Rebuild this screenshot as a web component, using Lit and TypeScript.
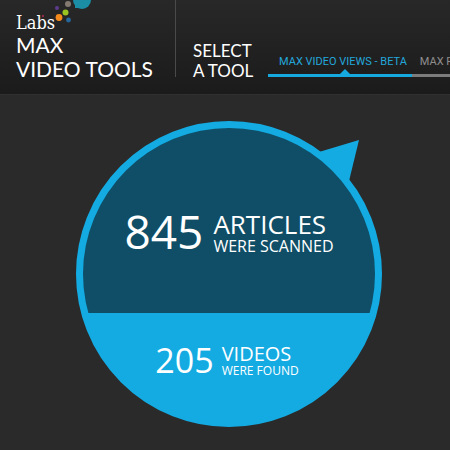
import { LitElement, html, css, svg } from "lit";
import { customElement } from "lit/decorators.js";

const DOTS = [
  { x: 82, y: 0, r: 9, fill: "#1b8ea6" },
  { x: 68, y: 4, r: 3, fill: "#857a72" },
  { x: 57, y: 8, r: 2, fill: "#5d3a8c" },
  { x: 65.5, y: 12.5, r: 3, fill: "#9ac420" },
  { x: 59, y: 17.5, r: 3.4, fill: "#f58a1c" },
  { x: 68.5, y: 20, r: 2.4, fill: "#24689e" },
  { x: 43, y: 16, r: 1.2, fill: "#8c2a4a" },
];

@customElement("tool-header")
export class ToolHeader extends LitElement {
  static styles = css`
    :host {
      display: flex;
      overflow: hidden;
      background: linear-gradient(#292828, #1c1b1b);
      border-bottom: 1px solid #303030;
      padding-bottom: 13px;
      color: #fff;
      font-family: Lato, sans-serif;
      white-space: nowrap;
    }
    .brand {
      position: relative;
      flex: none;
      box-sizing: border-box;
      width: 175px;
      padding: 13px 0 0 16px;
    }
    .dots {
      position: absolute;
      top: 0;
      left: 0;
    }
    .labs {
      font: 18px/20px "DejaVu Serif Condensed", "DejaVu Serif", serif;
    }
    h1 {
      margin: 0;
      font-size: 21px;
      line-height: 24px;
      font-weight: 400;
    }
    .rule {
      flex: none;
      width: 1px;
      height: 77px;
      background: #4a4a4a;
    }
    h2 {
      flex: none;
      box-sizing: border-box;
      width: 92px;
      margin: 0;
      padding: 41px 0 0 17px;
      font-size: 17px;
      line-height: 20px;
      font-weight: 400;
    }
    nav {
      display: flex;
      flex: 1;
      min-width: 0;
      height: 77px;
      align-items: flex-end;
      font-family: Roboto, sans-serif;
    }
    a {
      position: relative;
      flex: none;
      padding: 0 5px 4px 8px;
      border-bottom: 3px solid #7c7c7c;
      color: #8e8e8e;
      font-size: 11px;
      line-height: 16px;
      text-decoration: none;
    }
    a:last-child {
      flex: 1;
    }
    a.current {
      padding-left: 11px;
      border-color: #16a9e0;
      color: #22a7dc;
    }
    a.current::after {
      content: "";
      position: absolute;
      bottom: 0;
      left: 50%;
      border: 5px solid transparent;
      border-top: 0;
      border-bottom-color: #16a9e0;
    }
  `;

  render() {
    return html`
      <div class="brand">
        <svg class="dots" width="100" height="34" aria-hidden="true">
          <path d="M75 0 V8 H82 Z" fill="#1b8ea6" />
          ${DOTS.map((d) => svg`<circle cx=${d.x} cy=${d.y} r=${d.r} fill=${d.fill} />`)}
        </svg>
        <div class="labs">Labs</div>
        <h1>MAX<br />VIDEO TOOLS</h1>
      </div>
      <div class="rule"></div>
      <h2>SELECT<br />A TOOL</h2>
      <nav aria-label="Select a tool">
        <a class="current" href="#views" aria-current="page">MAX VIDEO VIEWS - BETA</a>
        <a href="#more">MAX P</a>
      </nav>
    `;
  }
}

@customElement("scan-bubble")
export class ScanBubble extends LitElement {
  static styles = css`
    :host {
      position: relative;
      display: block;
      width: 306px;
      color: #fff;
      font-family: "Open Sans", sans-serif;
      white-space: nowrap;
    }
    .tail {
      position: absolute;
      top: 19px;
      right: 22px;
    }
    .disc {
      position: relative;
      box-sizing: border-box;
      aspect-ratio: 1;
      border: 7px solid #14abe3;
      border-radius: 50%;
      overflow: hidden;
      background: #14abe3;
    }
    .part {
      display: flex;
      justify-content: center;
    }
    .scanned {
      height: 185px;
      box-sizing: border-box;
      padding-top: 80px;
      gap: 10px;
      background: #0f4e66;
    }
    .found {
      padding: 30px 4px 0 0;
      gap: 8px;
    }
    .number {
      font-size: 46px;
      line-height: 46px;
      font-weight: 400;
    }
    .title {
      font-size: 26px;
      line-height: 32px;
    }
    .note {
      font-size: 16px;
      line-height: 12px;
    }
    .found .number {
      font-size: 34px;
      line-height: 34px;
    }
    .found .title {
      font-size: 20px;
      line-height: 22px;
    }
    .found .note {
      font-size: 12px;
    }
  `;

  render() {
    return html`
      <svg class="tail" width="42" height="42" viewBox="0 0 42 42" aria-hidden="true">
        <path d="M1 12 L41 0 L31 41 Z" fill="#14abe3" />
      </svg>
      <div class="disc">
        <div class="part scanned">
          <div class="number">845</div>
          <div>
            <div class="title">ARTICLES</div>
            <div class="note">WERE SCANNED</div>
          </div>
        </div>
        <div class="part found">
          <div class="number">205</div>
          <div>
            <div class="title">VIDEOS</div>
            <div class="note">WERE FOUND</div>
          </div>
        </div>
      </div>
    `;
  }
}

@customElement("app-root")
export class AppRoot extends LitElement {
  static styles = css`
    :host {
      display: block;
      min-height: 100vh;
      background: #2a2a2a;
    }
    main {
      display: flex;
      justify-content: center;
      padding: 26px 0 0 8px;
    }
  `;

  render() {
    return html`
      <tool-header></tool-header>
      <main><scan-bubble></scan-bubble></main>
    `;
  }
}
